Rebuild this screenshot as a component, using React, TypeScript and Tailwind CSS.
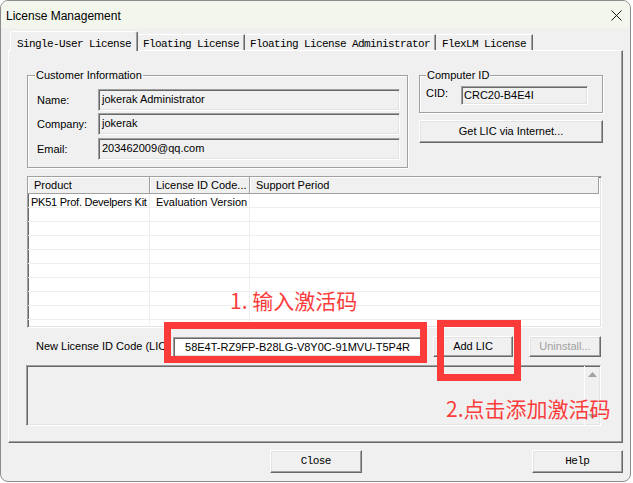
import React from "react";

const raised =
  "border border-t-white border-l-white border-r-[#696969] border-b-[#696969] shadow-[inset_-1px_-1px_0_#a0a0a0,inset_1px_1px_0_#e3e3e3] bg-[#f0f0f0]";
const sunken =
  "border border-t-[#a0a0a0] border-l-[#a0a0a0] border-r-white border-b-white shadow-[inset_1px_1px_0_#696969,inset_-1px_-1px_0_#e3e3e3]";
const group =
  "relative border border-[#a0a0a0] shadow-[inset_1px_1px_0_#fff,1px_1px_0_#fff]";
const mono = "font-['Liberation_Mono','Courier_New',monospace] text-[11px] tracking-[-0.6px]";
const cjk = "font-['Noto_Sans_CJK_SC','Noto_Sans',sans-serif]";

function Field({ label, value, className }: { label: string; value: string; className?: string }) {
  return (
    <div className={"flex items-center " + (className || "")}>
      <span className="w-[61px]">{label}</span>
      <div className={sunken + " w-[302px] h-[22px] bg-[#f0f0f0] pl-[3px] leading-[19px]"}>{value}</div>
    </div>
  );
}

function Tab({ label, width, active }: { label: string; width: string; active?: boolean }) {
  if (active) {
    return (
      <div
        className={
          "relative z-10 h-[20px] border-l border-t border-r border-l-white border-t-white border-r-[#696969] shadow-[inset_-1px_0_0_#a0a0a0] rounded-t-[2px] bg-[#f0f0f0] flex justify-center pt-[4px] " +
          mono +
          " " +
          width
        }
      >
        {label}
      </div>
    );
  }
  return (
    <div
      className={
        "h-[16px] mb-[1px] border-t border-r border-t-white border-r-[#696969] shadow-[inset_-1px_0_0_#a0a0a0] flex justify-center pt-[1px] " +
        mono +
        " " +
        width
      }
    >
      {label}
    </div>
  );
}

export default function App() {
  const rows = [
    ["PK51 Prof. Develpers Kit", "Evaluation Version", ""],
    ["", "", ""],
    ["", "", ""],
    ["", "", ""],
    ["", "", ""],
    ["", "", ""],
    ["", "", ""],
    ["", "", ""],
    ["", "", ""],
    ["", "", ""],
  ];

  return (
    <div className="relative w-[633px] h-[483px] bg-white overflow-hidden font-['Liberation_Sans',Arial,sans-serif] text-[11px] text-black">
      <div className="flex flex-col w-[631px] h-[482px] border border-[#8c8c8c] rounded-[8px] bg-[#f0f0f0] overflow-hidden">
        {/* title bar */}
        <div className="flex items-center justify-between h-[27px] bg-[#f2f6ec] pl-[5px] pr-[8px]">
          <span className="text-[12px] pt-[2px]">License Management</span>
          <svg width="11" height="11" viewBox="0 0 11 11" className="mt-[1px]">
            <path d="M0.5 0.5L10.5 10.5M10.5 0.5L0.5 10.5" stroke="#1a1a1a" strokeWidth="1" />
          </svg>
        </div>

        <div className="flex flex-col px-[7px] pt-[3px]">
          {/* tabs */}
          <div className="flex items-end h-[20px] ml-[2px]">
            <Tab label="Single-User License" width="w-[128px]" active />
            <Tab label="Floating License" width="w-[107px]" />
            <Tab label="Floating License Administrator" width="w-[191px]" />
            <Tab label="FlexLM License" width="w-[97px]" />
          </div>

          {/* tab panel */}
          <div className="flex flex-col w-[615px] h-[393px] mt-[-1px] border border-t-white border-l-white border-r-[#696969] border-b-[#696969] shadow-[inset_-1px_-1px_0_#a0a0a0] pt-[24px] pl-[18px]">
            <div className="flex">
              <div className={group + " w-[381px] h-[93px] pt-[13px] pl-[9px]"}>
                <span className="absolute left-[7px] top-[-8px] px-[1px] bg-[#f0f0f0] leading-[14px]">
                  Customer Information
                </span>
                <Field label="Name:" value="jokerak Administrator" />
                <Field label="Company:" value="jokerak" className="mt-[2px]" />
                <Field label="Email:" value="203462009@qq.com" className="mt-[3px]" />
              </div>

              <div className="flex flex-col ml-[11px] w-[184px]">
                <div className={group + " h-[38px] pt-[10px] pl-[6px] flex items-start"}>
                  <span className="absolute left-[6px] top-[-8px] px-[1px] bg-[#f0f0f0] leading-[14px]">
                    Computer ID
                  </span>
                  <span className="w-[35px] leading-[15px]">CID:</span>
                  <div className={sunken + " w-[127px] h-[19px] bg-[#f0f0f0] pl-[2px] leading-[17px]"}>
                    CRC20-B4E4I
                  </div>
                </div>
                <button className={raised + " mt-[7px] h-[23px] w-full text-[11px]"}>Get LIC via Internet...</button>
              </div>
            </div>

            {/* license list */}
            <div className={sunken + " mt-[8px] w-[575px] h-[152px] bg-white overflow-hidden"}>
              <div className="flex h-[17px]">
                <div className="w-[122px] border-r border-b border-[#a0a0a0] shadow-[inset_1px_1px_0_#fff] bg-[#f0f0f0] pl-[6px] leading-[17px]">
                  Product
                </div>
                <div className="w-[100px] border-r border-b border-[#a0a0a0] shadow-[inset_1px_1px_0_#fff] bg-[#f0f0f0] pl-[6px] leading-[17px]">
                  License ID Code...
                </div>
                <div className="w-[349px] border-r border-b border-[#a0a0a0] shadow-[inset_1px_1px_0_#fff] bg-[#f0f0f0] pl-[6px] leading-[17px]">
                  Support Period
                </div>
              </div>
              {rows.map((r, i) => (
                <div key={i} className="flex h-[14px]">
                  <div className="w-[122px] border-r border-b border-[#eeeeee] pl-[3px] pt-[2px] leading-[12px] tracking-[-0.25px] whitespace-nowrap">
                    {r[0]}
                  </div>
                  <div className="w-[100px] border-r border-b border-[#eeeeee] pl-[6px] pt-[2px] leading-[12px] whitespace-nowrap">
                    {r[1]}
                  </div>
                  <div className="flex-1 border-b border-[#eeeeee]">{r[2]}</div>
                </div>
              ))}
            </div>

            {/* new license row */}
            <div className="flex items-center h-[21px] mt-[8px]">
              <span className="ml-[9px] w-[137px] whitespace-nowrap">New License ID Code (LIC)</span>
              <div className={sunken + " w-[249px] h-[20px] bg-white text-center leading-[18px]"}>
                58E4T-RZ9FP-B28LG-V8Y0C-91MVU-T5P4R
              </div>
              <button className={raised + " ml-[11px] w-[80px] h-[21px] text-[11px]"}>Add LIC</button>
              <button className={raised + " ml-[16px] w-[72px] h-[21px] text-[11px] text-[#a0a0a0]"}>
                Uninstall...
              </button>
            </div>

            {/* message area */}
            <div className={sunken + " mt-[8px] ml-[-1px] w-[575px] h-[61px] bg-[#f0f0f0] flex"}>
              <div className="flex-1" />
              <div className="w-[16px] flex flex-col justify-between items-center py-[6px] border-l border-l-white">
                <svg width="9" height="5" viewBox="0 0 9 5">
                  <path d="M4.5 0L9 5H0Z" fill="#a3a3a3" />
                </svg>
                <svg width="9" height="5" viewBox="0 0 9 5">
                  <path d="M0 0H9L4.5 5Z" fill="#a3a3a3" />
                </svg>
              </div>
            </div>
          </div>

          {/* bottom buttons */}
          <div className="flex mt-[7px]">
            <button className={raised + " " + mono + " ml-[262px] w-[92px] h-[23px]"}>Close</button>
            <button className={raised + " " + mono + " ml-[170px] w-[92px] h-[23px]"}>Help</button>
          </div>
        </div>
      </div>

      {/* red annotations */}
      <div className="absolute left-[164px] top-[322px] w-[263px] h-[41px] border-[7px] border-[#fb3a3a]" />
      <div className="absolute left-[437px] top-[320px] w-[84px] h-[61px] border-[7px] border-[#fb3a3a]" />
      <div className={"absolute left-[230px] top-[289px] text-[21px] leading-[23px] text-[#fa3c3c] " + cjk}>
        1. 输入激活码
      </div>
      <div className={"absolute left-[446px] top-[397px] text-[21px] leading-[23px] text-[#fa3c3c] " + cjk}>
        2.点击添加激活码
      </div>
    </div>
  );
}
